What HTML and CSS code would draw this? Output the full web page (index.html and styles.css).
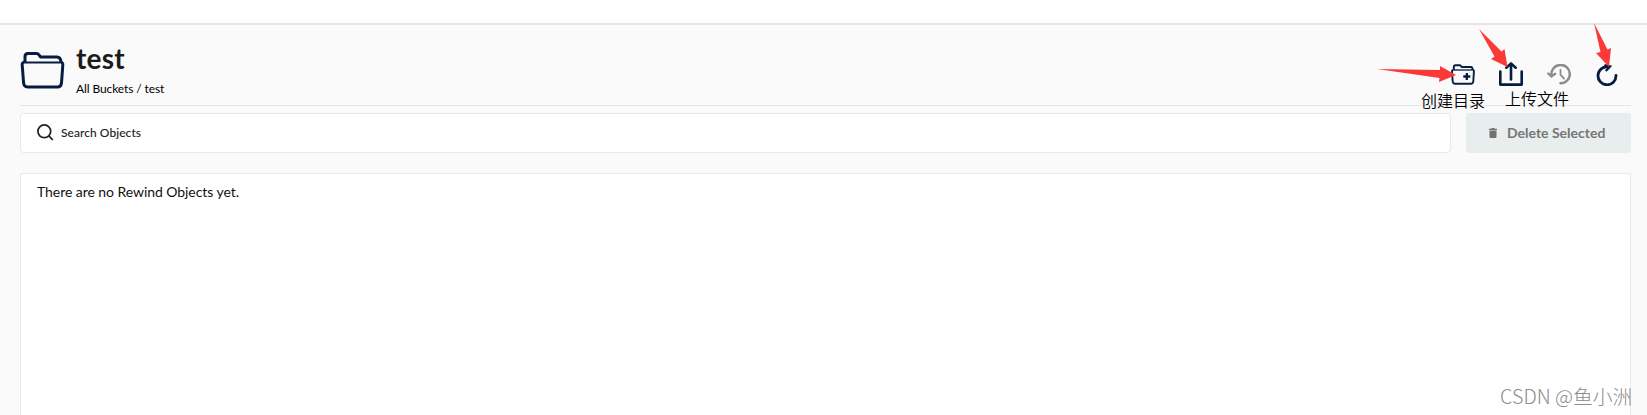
FILE: index.html
```html
<!DOCTYPE html>
<html lang="en">
<head>
<meta charset="utf-8">
<title>test</title>
<link rel="stylesheet" href="styles.css">
</head>
<body>
<div class="topbar"></div>
<main class="page">
  <header class="header">
    <svg class="bucket-icon" width="46" height="40" viewBox="0 0 46 40" fill="none" stroke="#081c42" stroke-width="3" stroke-linejoin="round">
      <path d="M5 12V6.500Q5 3.500 8 3.500H16.500Q18 3.500 19 4.800L20.500 7H37Q40.500 7 41 12"/>
      <path d="M4 12.500Q2 12.500 2.200 15L3.600 33Q4 37 7.500 37H37.500Q41 37 41.500 33L42.800 15Q43 12.500 41 12.500"/>
      <path d="M4 12.500H42" stroke-width="2"/>
    </svg>
    <div class="heading">
      <h1 class="title">test</h1>
      <div class="crumbs">All Buckets / test</div>
    </div>
    <div class="actions">
      <svg width="24" height="21" viewBox="0 0 24 21" fill="none" stroke="#081c42" stroke-width="1.900" stroke-linejoin="round">
        <path d="M2.800 6V3Q2.800 1.200 4.500 1.200H9L10.800 3H20Q21.600 3 21.600 6"/>
        <path d="M2.400 6Q1 6 1 7.500L1.700 17.500Q2 19.800 4 19.800H20Q22 19.800 22.300 17.500L22.900 7.500Q23 6 21.600 6"/>
        <path d="M2.400 6H21.600" stroke-width="1.300"/>
        <path d="M15.800 9V16M12.300 12.500H19.300" stroke-width="2.300"/>
      </svg>
      <svg width="24" height="24" viewBox="0 0 24 24" fill="none" stroke="#081c42" stroke-width="2.600" stroke-linejoin="round" stroke-linecap="round">
        <path d="M1.300 9.500V22.600H22.700V9.500"/>
        <path d="M12 17.500V2" stroke-width="2.600"/>
        <path d="M7.300 5.700L12 1.600L16.700 5.700" stroke-width="2.600"/>
      </svg>
      <svg width="24" height="21" viewBox="0 0 24 21" fill="none" stroke="#8c8c8c" stroke-width="2.500" stroke-linecap="round">
        <path d="M4.500 11.500A9.200 9.200 0 1 1 13.500 19.300"/>
        <path d="M1.300 9.500L4.400 12.500L8.200 9.800" stroke-width="2.400"/>
        <path d="M13.500 6V11L17 14.500" stroke-width="1.800"/>
      </svg>
      <svg width="22" height="22" viewBox="0 0 22 22" fill="none" stroke="#081c42" stroke-width="2.800" stroke-linecap="round">
        <path d="M20 11.500A9 9 0 1 1 12.500 2.900"/>
        <path d="M9.500 1.300L14 2.500L10.500 6.300" stroke-width="2.400"/>
      </svg>
    </div>
  </header>
  <div class="toolbar">
    <label class="search">
      <svg width="17" height="17" viewBox="0 0 17 17" fill="none" stroke="#212121" stroke-width="1.700"><circle cx="7.300" cy="7.300" r="6.400"/><path d="M11.800 11.800L15.800 15.800"/></svg>
      <span>Search Objects</span>
    </label>
    <button class="delete" disabled>
      <svg width="8" height="10" viewBox="0 0 8 10" fill="#707070"><path d="M0 .8H2.300L2.800 0H5.200L5.700.8H8V2H0ZM.5 2.600H7.500V8.800Q7.500 10 6.400 10H1.600Q.5 10 .5 8.800Z"/></svg>
      <span>Delete Selected</span>
    </button>
  </div>
  <section class="objects">There are no Rewind Objects yet.</section>
</main>
<svg class="arrows" width="1647" height="115" viewBox="0 0 1647 115" fill="#fb3a38">
  <path d="M1377 69L1440 70L1440 66L1456 75L1439 82L1439.500 78Z"/>
  <path d="M1479 29L1501.500 51.500L1504.500 49L1507.500 67L1491 59L1494.500 56.500Z"/>
  <path d="M1594 23L1607.500 49.500L1611 48L1609 67L1596 53L1600.500 52Z"/>
</svg>
<div class="note note-create">创建目录</div>
<div class="note note-upload">上传文件</div>
<div class="watermark">CSDN @鱼小洲</div>
</body>
</html>
```
FILE: styles.css
```css
* { box-sizing: border-box; }
body {
  margin: 0;
  height: 415px;
  overflow: hidden;
  position: relative;
  display: flex;
  flex-direction: column;
  background: #fafafa;
  color: #000;
  font-family: Lato, "Noto Sans CJK SC", sans-serif;
}
.topbar { flex: none; height: 25px; background: #fff; border-bottom: 2px solid #e5e5e5; }
.page { flex: 1; display: flex; flex-direction: column; padding: 0 16px 0 20px; }
.header { height: 81px; flex: none; display: flex; border-bottom: 1px solid #e5e5e5; }
.bucket-icon { margin: 25px 0 0 -0.5px; }
.heading { margin-left: 10.5px; padding-top: 16px; }
.title { margin: 0; font-size: 28px; line-height: 34px; font-weight: 700; color: #1c1c1c; letter-spacing: 0.2px; }
.crumbs { margin-top: 5px; font-size: 12px; line-height: 18px; letter-spacing: -0.1px; }
.actions { margin: 37px 13px 0 auto; display: flex; gap: 24px; align-items: flex-start; }
.actions svg:nth-child(1) { margin-top: 2px; }
.actions svg:nth-child(3) { margin-top: 2px; }
.actions svg:nth-child(4) { margin-top: 2px; margin-left: 1px; }
.toolbar { display: flex; gap: 15px; height: 40px; margin-top: 7px; flex: none; }
.search {
  flex: 1;
  display: flex;
  align-items: center;
  gap: 7px;
  padding-left: 16px;
  padding-bottom: 1px;
  background: #fff;
  border: 1px solid #e5eaea;
  border-radius: 4px;
  font-size: 12px;
  font-weight: 500;
  letter-spacing: 0.05px;
  color: #212121;
}
.delete {
  width: 165px;
  border: 0;
  border-radius: 3px;
  background: #e8eded;
  color: #767676;
  display: flex;
  align-items: center;
  gap: 10px;
  padding: 0 0 1px 23px;
  font: 700 14px Lato, sans-serif;
}
.objects {
  flex: 1;
  margin-top: 20px;
  padding: 9px 16px;
  border: 1px solid #e5eaea;
  border-bottom: 0;
  border-radius: 3px 3px 0 0;
  background: #fff;
  color: #111;
  font-size: 14px;
  line-height: 17px;
  letter-spacing: -0.06px;
}
.arrows { position: absolute; left: 0; top: 0; }
.note {
  position: absolute;
  font: 350 16px/20px "Noto Sans CJK SC", sans-serif;
  white-space: nowrap;
}
.note-create { left: 1421px; top: 90px; }
.note-upload { left: 1505px; top: 88px; }
.watermark {
  position: absolute;
  left: 1500px;
  top: 383px;
  font: 300 19.8px/26px "Noto Sans CJK SC", sans-serif;
  color: #8c8c8c;
  white-space: nowrap;
}
```
